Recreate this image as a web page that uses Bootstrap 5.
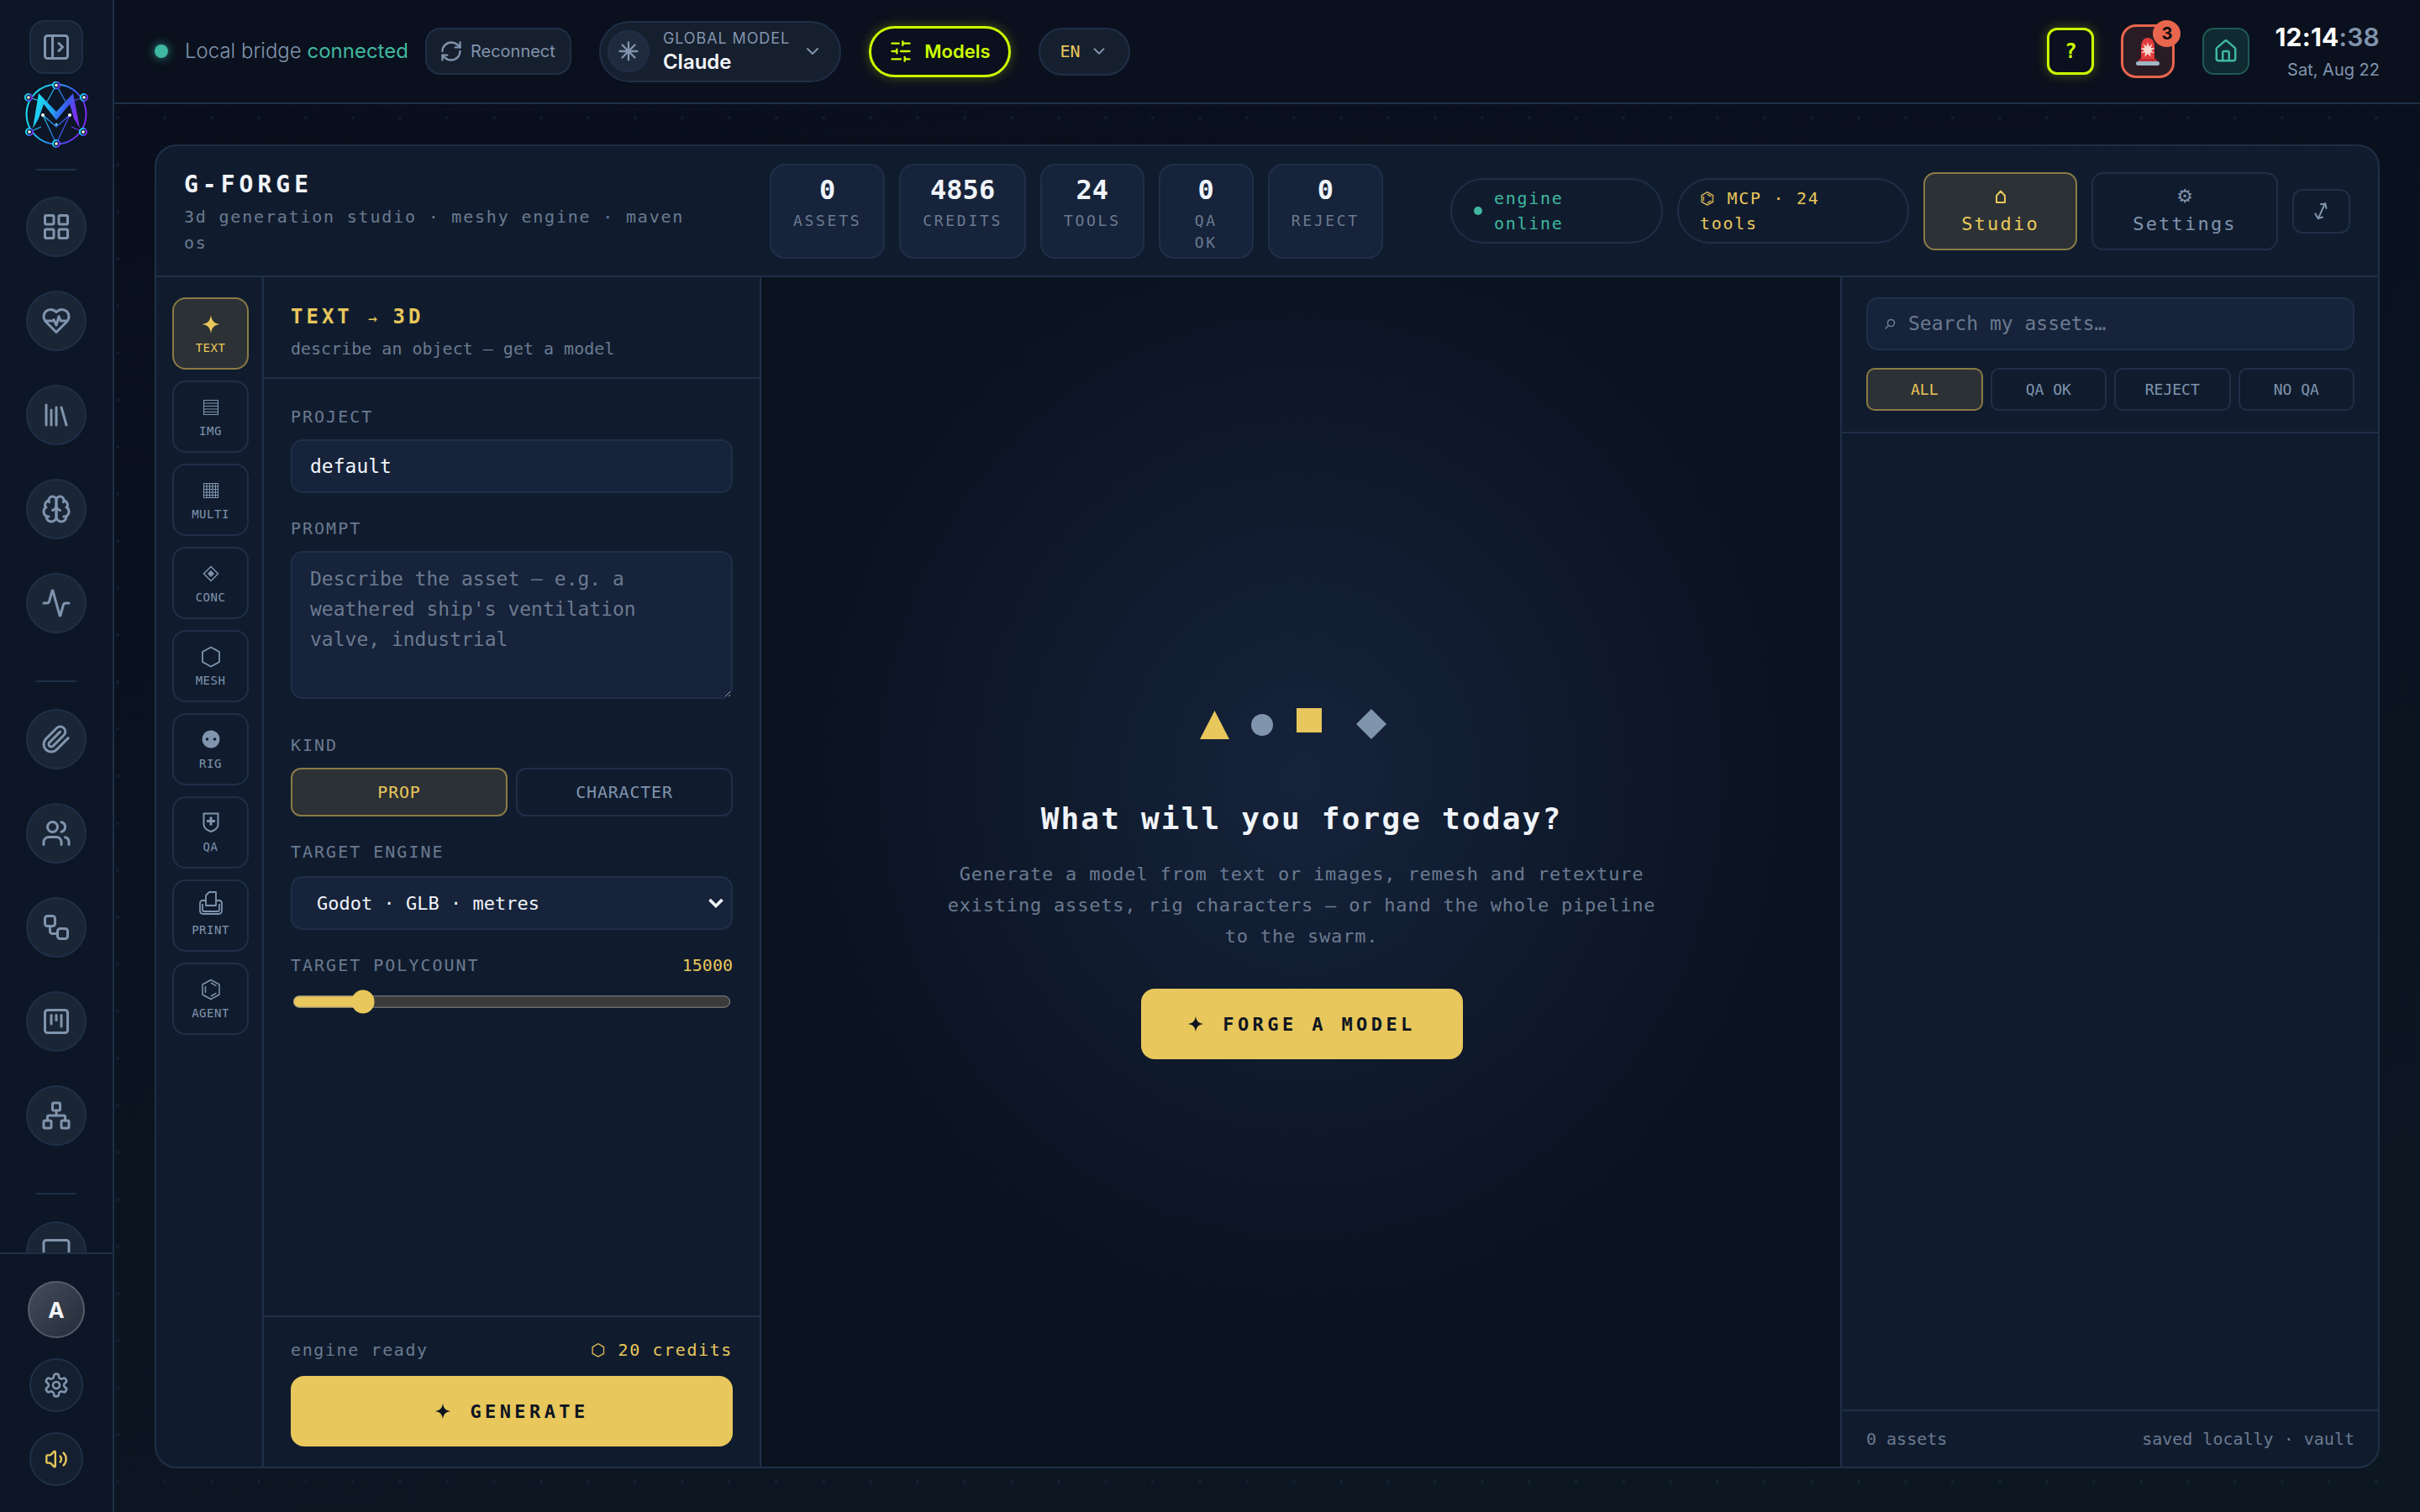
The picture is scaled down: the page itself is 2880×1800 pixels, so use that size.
<!DOCTYPE html>
<html lang="en" data-bs-theme="dark">
<head>
    <meta charset="UTF-8">
    <meta name="viewport" content="width=device-width, initial-scale=1.0">
    <title>G-Forge</title>
    <link href="https://cdn.jsdelivr.net/npm/bootstrap@5.3.0/dist/css/bootstrap.min.css" rel="stylesheet">
    <style>
        :root {
            --mono: "DejaVu Sans Mono", "Liberation Mono", monospace;
            --glyph: "DejaVu Sans", "DejaVu Sans Mono", sans-serif;
            --line: #1f2f47;
            --muted: #8094ad;
            --dim: #6b7a90;
            --gold: #e8c75c;
            --lime: #ccff00;
            --teal: #3fb8a0;
            --coral: #e8654e;
            --panel: #101c2e;
            --field: #16233a;
            --ink: #f0f4fa;
        }
        html, body { height: 100%; }
        body {
            width: 2880px;
            height: 1800px;
            overflow: hidden;
            color-scheme: dark;
            font-family: Inter, sans-serif;
            color: var(--ink);
            background: linear-gradient(170deg, #080e1b 0%, #0c1320 55%, #0c1722 100%);
        }
        svg.line-ico { fill: none; stroke: currentColor; stroke-width: 2; stroke-linecap: round; stroke-linejoin: round; display: block; }

        /* sidebar */
        .side-bar { width: 136px; height: 1800px; flex: none; background: #0c1626; border-right: 2px solid var(--line); }
        .side-head { padding-top: 24px; flex: none; }
        .side-toggle { width: 64px; height: 64px; border-radius: 18px; background: #172233; border: 2px solid var(--line); color: var(--muted); padding: 0; display: flex; align-items: center; justify-content: center; }
        .side-logo { width: 80px; height: 80px; margin-top: 9px; display: block; }
        .side-sep { width: 48px; height: 2px; background: var(--line); flex: none; }
        .side-head .side-sep { margin-top: 24px; }
        .side-nav { padding-top: 31px; gap: 40px; overflow: hidden; min-height: 0; }
        .side-nav .side-sep { margin: 16px 0 -8px; }
        .side-ico { width: 72px; height: 72px; flex: none; border-radius: 50%; padding: 0; background: #1a2636; border: 2px solid var(--line); color: var(--muted); display: flex; align-items: center; justify-content: center; }
        .side-foot { flex: none; border-top: 2px solid var(--line); padding: 32px 0 31px; gap: 24px; }
        .side-foot .side-ico { width: 64px; height: 64px; background: #14202f; }
        .side-foot .gold-ico { color: var(--gold); }
        .side-avatar { width: 68px; height: 68px; border-radius: 50%; background: linear-gradient(135deg, #434c5c, #262c38); border: 2px solid #565d6a; font-weight: 700; font-size: 26px; color: #f2f4f8; display: flex; align-items: center; justify-content: center; }

        /* top bar */
        .top-bar { height: 124px; flex: none; border-bottom: 2px solid var(--line); padding: 0 48px; background: #0a101d; }
        .bridge-dot { width: 16px; height: 16px; border-radius: 50%; background: var(--teal); box-shadow: 0 0 12px rgba(63, 184, 160, .75); }
        .bridge-text { font-size: 24px; font-weight: 300; color: var(--muted); white-space: nowrap; margin-left: 20px; }
        .bridge-text b { font-weight: 400; color: var(--teal); }
        .reconnect-btn { width: 174px; height: 56px; margin-left: 20px; border-radius: 18px; background: #161f2e; border: 2px solid var(--line); color: var(--muted); font-size: 20px; padding: 0 0 0 15px; display: flex; align-items: center; gap: 9px; }
        .model-pill { width: 288px; height: 73px; margin-left: 33px; border-radius: 37px; background: #161f2e; border: 2px solid var(--line); display: flex; align-items: center; padding: 0 0 0 8px; }
        .model-ico { width: 50px; height: 50px; border-radius: 50%; background: #1f2b3d; border: 2px solid var(--line); color: var(--muted); display: flex; align-items: center; justify-content: center; flex: none; }
        .model-txt { margin-left: 16px; flex-grow: 1; line-height: 1; white-space: nowrap; }
        .model-txt small { display: block; font-size: 18px; color: var(--muted); font-weight: 400; letter-spacing: .9px; margin-bottom: 7px; }
        .model-txt strong { display: block; font-size: 24px; font-weight: 600; color: #f4f6fa; }
        .model-pill svg.chev, .lang-btn svg { color: var(--muted); }
        .model-pill svg.chev { margin-right: 20px; }
        .models-btn { width: 169px; height: 61px; margin-left: 33px; border-radius: 31px; background: #0a101d; border: 3px solid var(--lime); color: var(--lime); font-size: 22px; font-weight: 600; box-shadow: 0 0 14px rgba(204, 255, 0, .3); padding: 0; display: flex; align-items: center; justify-content: center; gap: 14px; }
        .lang-btn { width: 109px; height: 57px; margin-left: 33px; border-radius: 29px; background: #161f2e; border: 2px solid var(--line); color: var(--gold); font-family: var(--mono); font-size: 20px; padding: 0; display: flex; align-items: center; justify-content: center; gap: 12px; }
        .help-btn { width: 56px; height: 56px; border-radius: 12px; background: #0a101d; border: 3px solid var(--lime); color: var(--lime); font-family: var(--mono); font-weight: 700; font-size: 24px; padding: 0; box-shadow: 0 0 14px rgba(204, 255, 0, .3); }
        .alarm-btn { width: 64px; height: 64px; margin-left: 32px; border-radius: 18px; background: #2a1c24; border: 3px solid var(--coral); padding: 0; display: flex; align-items: center; justify-content: center; position: relative; }
        .alarm-count { position: absolute; top: -8px; right: -10px; width: 33px; height: 32px; border-radius: 50%; background: var(--coral); color: #0a0d14; font-size: 20px; font-weight: 700; display: flex; align-items: center; justify-content: center; }
        .home-btn { width: 56px; height: 56px; margin-left: 33px; border-radius: 14px; background: #0f2a30; border: 2px solid #1f5a56; color: var(--teal); padding: 0; display: flex; align-items: center; justify-content: center; }
        .clock-box { margin-left: 30px; text-align: right; line-height: 1; }
        .clock-time { font-size: 30px; font-weight: 700; color: #fff; letter-spacing: .2px; margin-bottom: 14px; }
        .clock-time span { color: var(--muted); font-weight: 600; }
        .clock-date { font-size: 20px; color: var(--muted); }

        /* main area */
        .main-area {
            min-height: 0;
            padding: 48px 48px 52px;
            background-image: radial-gradient(circle, rgba(60, 84, 116, .17) 2px, transparent 2.5px);
            background-size: 56px 56px;
            background-position: -24px -12px;
        }
        .forge-panel { height: 100%; background: var(--panel); border: 2px solid var(--line); border-radius: 26px; overflow: hidden; font-family: var(--mono); }
        .panel-head { height: 156px; flex: none; border-bottom: 2px solid var(--line); padding: 0 33px; }
        .head-title { width: 630px; flex: none; }
        .head-title h1 { font-family: var(--mono); font-size: 28px; font-weight: 700; letter-spacing: 5px; margin: 3px 0 4px; line-height: 38px; color: #f2f5fa; }
        .head-title p { font-size: 20px; letter-spacing: 1.8px; line-height: 31px; color: var(--dim); margin: 0; }
        .stat-row { gap: 17px; margin-left: 67px; }
        .stat-box { height: 113px; padding: 9px 26px 0; border: 2px solid var(--line); border-radius: 18px; background: var(--field); text-align: center; flex: none; }
        .stat-box.qa-stat { width: 113px; }
        .stat-val { font-size: 32px; font-weight: 700; line-height: 40px; color: var(--ink); }
        .stat-lbl { font-size: 18px; letter-spacing: 2.7px; line-height: 26px; color: var(--dim); margin-top: 4px; }
        .head-right { gap: 17px; margin-left: auto; }
        .status-pill { height: 78px; border: 2px solid var(--line); border-radius: 39px; font-size: 20px; letter-spacing: 1.7px; line-height: 30px; display: flex; align-items: center; }
        .status-pill.engine-pill { width: 253px; padding-left: 26px; color: var(--teal); gap: 14px; }
        .status-pill.engine-pill i { width: 10px; height: 10px; border-radius: 50%; background: var(--teal); display: block; }
        .status-pill.mcp-pill { width: 276px; padding-left: 25px; color: var(--gold); }
        .tab-btn { height: 93px; padding: 0; border-radius: 14px; border: 2px solid var(--line); background: transparent; color: var(--muted); font-family: var(--mono); font-size: 22px; letter-spacing: 2.2px; line-height: 30px; display: flex; flex-direction: column; align-items: center; justify-content: center; gap: 4px; }
        .tab-btn span { font-family: var(--glyph); font-size: 22px; line-height: 28px; letter-spacing: 0; display: flex; align-items: center; height: 28px; }
        .tab-btn.on { color: var(--gold); background: #2c3135; border-color: #8a7a45; }
        .tab-studio { width: 183px; }
        .tab-settings { width: 222px; }
        .expand-btn { width: 69px; height: 53px; padding: 0; border-radius: 12px; border: 2px solid var(--line); background: transparent; color: var(--muted); display: flex; align-items: center; justify-content: center; }

        .panel-body { min-height: 0; }
        .tool-rail { width: 128px; flex: none; border-right: 2px solid var(--line); padding: 24px 16px 0 19px; gap: 13px; }
        .rail-btn { width: 91px; height: 86px; padding: 0; border-radius: 16px; border: 2px solid var(--line); background: transparent; color: var(--muted); display: flex; flex-direction: column; align-items: center; justify-content: center; gap: 3px; }
        .rail-btn svg { display: block; overflow: visible; }
        .rail-btn svg.rail-line { fill: none; stroke: currentColor; stroke-width: 1.5; stroke-linejoin: round; }
        .rail-btn svg.rail-line.rail-fine { stroke-width: 1.1; }
        .rail-btn svg.rail-line.rail-bold { stroke-width: 1.8; }
        .rail-btn em { font-family: var(--mono); font-style: normal; font-size: 14px; letter-spacing: .5px; line-height: 20px; }
        .rail-btn.on { color: var(--gold); background: #2c3135; border-color: #8a7a45; }

        .form-col { width: 592px; flex: none; border-right: 2px solid var(--line); }
        .form-head { height: 121px; flex: none; border-bottom: 2px solid var(--line); padding: 30px 32px 0; }
        .form-head h2 { font-family: var(--mono); font-size: 24px; font-weight: 700; letter-spacing: 4px; line-height: 34px; color: var(--gold); margin: 0 0 4px; }
        .form-head h2 span { font-size: 18px; font-weight: 400; letter-spacing: 0; }
        .form-head p { font-size: 20px; line-height: 30px; color: var(--dim); margin: 0; }
        .form-body { padding: 31px 32px 0 32px; }
        .form-group { margin-bottom: 28px; }
        .form-group.after-area { margin-bottom: 41px; }
        .field-lbl { font-size: 20px; letter-spacing: 2px; line-height: 28px; color: var(--dim); margin: 0 0 13px; display: block; }
        .field-lbl.lbl-far { margin-bottom: 15px; }
        .field-input { height: 64px; border-radius: 14px; border: 2px solid var(--line); background-color: var(--field); color: var(--ink); font-family: var(--mono); font-size: 23px; padding: 0 21px; }
        .field-input::placeholder { color: var(--dim); opacity: 1; }
        .field-area { height: 176px; border-radius: 14px; border: 2px solid var(--line); background-color: var(--field); font-family: var(--mono); font-size: 23px; line-height: 36px; padding: 13px 21px; }
        .field-area::placeholder { color: var(--dim); opacity: 1; }
        .field-select {
            height: 64px;
            border-radius: 14px;
            border: 2px solid var(--line);
            background-color: var(--field);
            color: var(--ink);
            font-family: var(--mono);
            font-size: 22px;
            padding: 0 40px 0 29px;
            background-image: url("data:image/svg+xml,%3csvg xmlns='http://www.w3.org/2000/svg' viewBox='0 0 20 16'%3e%3cpath fill='none' stroke='%23f0f4fa' stroke-width='3.6' d='M2.5 4l7.5 7.5L17.5 4'/%3e%3c/svg%3e");
            background-size: 20px 16px;
            background-position: right 8px center;
        }
        .kind-row { gap: 10px; }
        .kind-btn { flex: 1 1 0; height: 58px; padding: 0; border-radius: 12px; border: 2px solid var(--line); background: transparent; color: var(--muted); font-family: var(--mono); font-size: 20px; letter-spacing: .8px; }
        .kind-btn.on { color: var(--gold); background: #2c3135; border-color: #8a7a45; }
        .poly-val { font-size: 20px; color: var(--gold); line-height: 28px; }
        .poly-range { display: block; width: calc(100% - 2px); margin: 1px 0 0 1px; zoom: 1.8; accent-color: var(--gold); color-scheme: dark; }
        .form-foot { flex: none; border-top: 2px solid var(--line); padding: 25px 32px 24px 32px; }
        .foot-line { font-size: 20px; letter-spacing: 1.6px; line-height: 28px; margin-bottom: 17px; color: var(--dim); }
        .foot-line b { font-weight: 400; color: var(--gold); }
        .forge-btn { height: 84px; border-radius: 16px; border: 0; background: var(--gold); color: #0d1420; font-family: var(--mono); font-weight: 700; font-size: 22px; letter-spacing: 4.4px; padding: 0; display: flex; align-items: center; justify-content: center; gap: 22px; }
        .forge-btn:hover { background: var(--gold); color: #0d1420; }
        .forge-btn svg { display: block; fill: currentColor; }

        .stage-col { min-width: 0; padding-top: 28px; background: radial-gradient(ellipse 640px 700px at 50% 42%, #15233b 0%, #101b2e 45%, #0a111f 100%); }
        .stage-shapes { display: block; width: 222px; height: 38px; margin-right: 20px; }
        .stage-col h2 { font-family: var(--mono); font-size: 36px; font-weight: 700; letter-spacing: 2.2px; line-height: 50px; color: var(--ink); margin: 69px 0 22px; }
        .stage-col p { font-size: 22px; letter-spacing: .8px; line-height: 37px; color: var(--dim); margin: 0 0 44px; text-align: center; }
        .stage-col .forge-btn { width: 383px; }

        .asset-col { width: 640px; flex: none; border-left: 2px solid var(--line); margin-left: -2px; }
        .asset-top { flex: none; border-bottom: 2px solid var(--line); padding: 24px 28px 25px 29px; }
        .asset-search { height: 63px; border-radius: 14px; border: 2px solid var(--line); background: var(--field); color: var(--dim); font-size: 23px; padding: 0 19px; display: flex; align-items: center; gap: 15px; margin-bottom: 21px; }
        .asset-search svg { display: block; }
        .filter-row { gap: 9px; }
        .filter-btn { flex: 1 1 0; height: 51px; padding: 0; border-radius: 10px; border: 2px solid var(--line); background: transparent; color: var(--muted); font-family: var(--mono); font-size: 18px; }
        .filter-btn.on { color: var(--gold); background: #2c3135; border-color: #8a7a45; }
        .asset-foot { height: 68px; flex: none; border-top: 2px solid var(--line); padding: 0 28px 0 29px; font-size: 20px; color: var(--dim); }
    </style>
</head>
<body class="d-flex">

    <aside class="side-bar d-flex flex-column">
        <div class="side-head d-flex flex-column align-items-center">
            <button class="side-toggle" type="button">
                <svg class="line-ico" width="36" height="36" viewBox="0 0 24 24"><rect x="3" y="3" width="18" height="18" rx="2"/><path d="M9 3v18"/><path d="m14 9 3 3-3 3"/></svg>
            </button>
            <svg class="side-logo" viewBox="0 0 80 80">
                <defs>
                    <linearGradient id="logoGrad" x1="0" y1="0" x2="1" y2="0.3">
                        <stop offset="0" stop-color="#19f0f0"/>
                        <stop offset=".5" stop-color="#25a8f5"/>
                        <stop offset=".75" stop-color="#3a5cf0"/>
                        <stop offset="1" stop-color="#7a2ff0"/>
                    </linearGradient>
                </defs>
                <circle cx="40" cy="39" r="35.5" fill="none" stroke="url(#logoGrad)" stroke-width="2"/>
                <path d="M40 4 29 24M40 4l11 20M7 19l13 4M73 19l-13 4M8 60l14-6M72 60l-14-6M40 74 24 40M40 74l16-34M24 40l16 14 16-14" fill="none" stroke="url(#logoGrad)" stroke-width="1.2"/>
                <path d="M12 56 19 14 40 36 60 14 68 56 61 44 56 27 40 46 25 27 19 44z" fill="url(#logoGrad)"/>
                <g fill="#0c1626" stroke="url(#logoGrad)" stroke-width="2">
                    <circle cx="40" cy="4.5" r="4"/><circle cx="7" cy="19" r="4"/><circle cx="73" cy="19" r="4"/><circle cx="8" cy="60" r="4"/><circle cx="72" cy="60" r="4"/><circle cx="40" cy="74" r="4"/>
                </g>
                <g fill="#fff">
                    <circle cx="40" cy="4.5" r="1.8"/><circle cx="7" cy="19" r="1.8"/><circle cx="73" cy="19" r="1.8"/><circle cx="8" cy="60" r="1.8"/><circle cx="72" cy="60" r="1.8"/><circle cx="40" cy="74" r="1.8"/><circle cx="24" cy="40" r="2"/><circle cx="56" cy="40" r="2"/>
                </g>
                <circle cx="40" cy="51" r="1.5" fill="#6fdcff"/>
            </svg>
            <div class="side-sep"></div>
        </div>
        <nav class="side-nav d-flex flex-column align-items-center flex-grow-1">
            <button class="side-ico" type="button"><svg class="line-ico" width="36" height="36" viewBox="0 0 24 24"><rect x="3" y="3" width="7" height="7" rx="1"/><rect x="14" y="3" width="7" height="7" rx="1"/><rect x="14" y="14" width="7" height="7" rx="1"/><rect x="3" y="14" width="7" height="7" rx="1"/></svg></button>
            <button class="side-ico" type="button"><svg class="line-ico" width="36" height="36" viewBox="0 0 24 24"><path d="M19 14c1.49-1.46 3-3.21 3-5.5A5.5 5.5 0 0 0 16.5 3c-1.76 0-3 .5-4.5 2-1.5-1.5-2.74-2-4.5-2A5.5 5.5 0 0 0 2 8.5c0 2.3 1.5 4.05 3 5.5l7 7Z"/><path d="M3.22 12H9.5l.5-1 2 4.5 2-7 1.5 3.5h5.27"/></svg></button>
            <button class="side-ico" type="button"><svg class="line-ico" width="36" height="36" viewBox="0 0 24 24"><path d="m16 6 4 14"/><path d="M12 6v14"/><path d="M8 8v12"/><path d="M4 4v16"/></svg></button>
            <button class="side-ico" type="button"><svg class="line-ico" width="36" height="36" viewBox="0 0 24 24"><path d="M12 5a3 3 0 1 0-5.997.125 4 4 0 0 0-2.526 5.77 4 4 0 0 0 .556 6.588A4 4 0 1 0 12 18Z"/><path d="M12 5a3 3 0 1 1 5.997.125 4 4 0 0 1 2.526 5.77 4 4 0 0 1-.556 6.588A4 4 0 1 1 12 18Z"/><path d="M15 13a4.5 4.5 0 0 1-3-4 4.5 4.5 0 0 1-3 4"/><path d="M17.599 6.5a3 3 0 0 0 .399-1.375"/><path d="M6.003 5.125A3 3 0 0 0 6.401 6.5"/><path d="M3.477 10.896a4 4 0 0 1 .585-.396"/><path d="M19.938 10.5a4 4 0 0 1 .585.396"/><path d="M6 18a4 4 0 0 1-1.967-.516"/><path d="M19.967 17.484A4 4 0 0 1 18 18"/></svg></button>
            <button class="side-ico" type="button"><svg class="line-ico" width="36" height="36" viewBox="0 0 24 24"><path d="M22 12h-2.48a2 2 0 0 0-1.93 1.46l-2.35 8.36a.25.25 0 0 1-.48 0L9.24 2.18a.25.25 0 0 0-.48 0l-2.35 8.36A2 2 0 0 1 4.49 12H2"/></svg></button>
            <div class="side-sep"></div>
            <button class="side-ico" type="button"><svg class="line-ico" width="36" height="36" viewBox="0 0 24 24"><path d="m21.44 11.05-9.19 9.19a6 6 0 0 1-8.49-8.49l8.57-8.57A4 4 0 1 1 18 8.84l-8.59 8.57a2 2 0 0 1-2.83-2.83l8.49-8.48"/></svg></button>
            <button class="side-ico" type="button"><svg class="line-ico" width="36" height="36" viewBox="0 0 24 24"><path d="M16 21v-2a4 4 0 0 0-4-4H6a4 4 0 0 0-4 4v2"/><circle cx="9" cy="7" r="4"/><path d="M22 21v-2a4 4 0 0 0-3-3.87"/><path d="M16 3.13a4 4 0 0 1 0 7.75"/></svg></button>
            <button class="side-ico" type="button"><svg class="line-ico" width="36" height="36" viewBox="0 0 24 24"><rect x="3" y="3" width="8" height="8" rx="2"/><path d="M7 11v4a2 2 0 0 0 2 2h4"/><rect x="13" y="13" width="8" height="8" rx="2"/></svg></button>
            <button class="side-ico" type="button"><svg class="line-ico" width="36" height="36" viewBox="0 0 24 24"><rect x="3" y="3" width="18" height="18" rx="2"/><path d="M8 7v7"/><path d="M12 7v4"/><path d="M16 7v9"/></svg></button>
            <button class="side-ico" type="button"><svg class="line-ico" width="36" height="36" viewBox="0 0 24 24"><rect x="16" y="16" width="6" height="6" rx="1"/><rect x="2" y="16" width="6" height="6" rx="1"/><rect x="9" y="2" width="6" height="6" rx="1"/><path d="M5 16v-3a1 1 0 0 1 1-1h12a1 1 0 0 1 1 1v3"/><path d="M12 12V8"/></svg></button>
            <div class="side-sep"></div>
            <button class="side-ico" type="button"><svg class="line-ico" width="36" height="36" viewBox="0 0 24 24"><rect x="2" y="3" width="20" height="14" rx="2"/><path d="M8 21h8"/><path d="M12 17v4"/></svg></button>
        </nav>
        <div class="side-foot d-flex flex-column align-items-center">
            <div class="side-avatar">A</div>
            <button class="side-ico" type="button"><svg class="line-ico" width="32" height="32" viewBox="0 0 24 24"><path d="M12.22 2h-.44a2 2 0 0 0-2 2v.18a2 2 0 0 1-1 1.73l-.43.25a2 2 0 0 1-2 0l-.15-.08a2 2 0 0 0-2.73.73l-.22.38a2 2 0 0 0 .73 2.73l.15.1a2 2 0 0 1 1 1.72v.51a2 2 0 0 1-1 1.74l-.15.09a2 2 0 0 0-.73 2.73l.22.38a2 2 0 0 0 2.73.73l.15-.08a2 2 0 0 1 2 0l.43.25a2 2 0 0 1 1 1.73V20a2 2 0 0 0 2 2h.44a2 2 0 0 0 2-2v-.18a2 2 0 0 1 1-1.73l.43-.25a2 2 0 0 1 2 0l.15.08a2 2 0 0 0 2.73-.73l.22-.39a2 2 0 0 0-.73-2.73l-.15-.08a2 2 0 0 1-1-1.74v-.5a2 2 0 0 1 1-1.74l.15-.09a2 2 0 0 0 .73-2.73l-.22-.38a2 2 0 0 0-2.73-.73l-.15.08a2 2 0 0 1-2 0l-.43-.25a2 2 0 0 1-1-1.73V4a2 2 0 0 0-2-2z"/><circle cx="12" cy="12" r="3"/></svg></button>
            <button class="side-ico gold-ico" type="button"><svg class="line-ico" width="28" height="28" viewBox="0 0 24 24"><path d="M11 4.702a.705.705 0 0 0-1.203-.498L6.413 7.587A1.4 1.4 0 0 1 5.416 8H3a1 1 0 0 0-1 1v6a1 1 0 0 0 1 1h2.416a1.4 1.4 0 0 1 .997.413l3.383 3.384A.705.705 0 0 0 11 19.298z"/><path d="M16 9a5 5 0 0 1 0 6"/><path d="M19.364 18.364a9 9 0 0 0 0-12.728"/></svg></button>
        </div>
    </aside>

    <div class="flex-grow-1 d-flex flex-column">
        <header class="top-bar d-flex align-items-center">
            <span class="bridge-dot"></span>
            <span class="bridge-text">Local bridge <b>connected</b></span>
            <button class="reconnect-btn" type="button">
                <svg class="line-ico" width="28" height="28" viewBox="0 0 24 24"><path d="M3 12a9 9 0 0 1 9-9 9.75 9.75 0 0 1 6.74 2.74L21 8"/><path d="M21 3v5h-5"/><path d="M21 12a9 9 0 0 1-9 9 9.75 9.75 0 0 1-6.74-2.74L3 16"/><path d="M8 16H3v5"/></svg>
                Reconnect
            </button>
            <div class="model-pill">
                <span class="model-ico"><svg class="line-ico" width="28" height="28" viewBox="0 0 24 24"><path d="M12 3v18M3 12h18M5.6 5.6l12.8 12.8M18.4 5.6 5.6 18.4"/></svg></span>
                <div class="model-txt"><small>GLOBAL MODEL</small><strong>Claude</strong></div>
                <svg class="line-ico chev" width="24" height="24" viewBox="0 0 24 24"><path d="m6 9 6 6 6-6"/></svg>
            </div>
            <button class="models-btn" type="button">
                <svg class="line-ico" width="28" height="28" viewBox="0 0 24 24"><path d="M21 4h-7M10 4H3M21 12h-9M8 12H3M21 20h-5M12 20H3M14 2v4M8 10v4M16 18v4"/></svg>
                Models
            </button>
            <button class="lang-btn" type="button">EN <svg class="line-ico" width="22" height="22" viewBox="0 0 24 24"><path d="m6 9 6 6 6-6"/></svg></button>

            <button class="help-btn ms-auto" type="button">?</button>
            <button class="alarm-btn" type="button">
                <svg width="34" height="36" viewBox="0 0 34 36">
                    <path d="M9 28V13C9 6 12 2 17 2s8 4 8 11v15z" fill="#e23b3b"/>
                    <path d="M17 7l1.6 5.2 4-3.2-2 5 5 .6-4.6 2.6 4.2 3-5.2-.6.6 5.2L17 21l-3.6 3.8.6-5.2-5.2.6 4.2-3-4.6-2.6 5-.6-2-5 4 3.2z" fill="#f6d8d0"/>
                    <path d="M7 27h20l2 4H5z" fill="#c22b30"/>
                    <rect x="3" y="30" width="28" height="5" rx="2.5" fill="#9fb6c6"/>
                </svg>
                <span class="alarm-count">3</span>
            </button>
            <button class="home-btn" type="button">
                <svg class="line-ico" width="30" height="30" viewBox="0 0 24 24"><path d="M15 21v-8a1 1 0 0 0-1-1h-4a1 1 0 0 0-1 1v8"/><path d="M3 10a2 2 0 0 1 .709-1.528l7-5.999a2 2 0 0 1 2.582 0l7 5.999A2 2 0 0 1 21 10v9a2 2 0 0 1-2 2H5a2 2 0 0 1-2-2z"/></svg>
            </button>
            <div class="clock-box">
                <div class="clock-time">12:14<span>:38</span></div>
                <div class="clock-date">Sat, Aug 22</div>
            </div>
        </header>

        <main class="main-area flex-grow-1">
            <section class="forge-panel d-flex flex-column">
                <div class="panel-head d-flex align-items-center">
                    <div class="head-title">
                        <h1>G-FORGE</h1>
                        <p>3d generation studio · meshy engine · maven os</p>
                    </div>
                    <div class="stat-row d-flex">
                        <div class="stat-box"><div class="stat-val">0</div><div class="stat-lbl">ASSETS</div></div>
                        <div class="stat-box"><div class="stat-val">4856</div><div class="stat-lbl">CREDITS</div></div>
                        <div class="stat-box"><div class="stat-val">24</div><div class="stat-lbl">TOOLS</div></div>
                        <div class="stat-box qa-stat"><div class="stat-val">0</div><div class="stat-lbl">QA OK</div></div>
                        <div class="stat-box"><div class="stat-val">0</div><div class="stat-lbl">REJECT</div></div>
                    </div>
                    <div class="head-right d-flex align-items-center">
                        <div class="status-pill engine-pill"><i></i><span>engine<br>online</span></div>
                        <div class="status-pill mcp-pill"><span>⌬ MCP · 24<br>tools</span></div>
                        <button class="tab-btn tab-studio on" type="button"><span><svg class="line-ico" width="16" height="16" viewBox="0 0 16 16" stroke-width="1.5"><path d="M3 15V7l5-5.5L13 7v8z"/></svg></span>Studio</button>
                        <button class="tab-btn tab-settings" type="button"><span>⚙</span>Settings</button>
                        <button class="expand-btn" type="button"><svg class="line-ico" width="22" height="22" viewBox="0 0 22 22" stroke-width="1.5"><path d="M7 20 15 2"/><path d="M10 3h5.5l1 5"/><path d="M3.5 14.5 6.5 20 12 18.5"/></svg></button>
                    </div>
                </div>

                <div class="panel-body d-flex flex-grow-1">
                    <div class="tool-rail d-flex flex-column">
                        <button class="rail-btn on" type="button">
                            <svg width="30" height="30" viewBox="0 0 30 30" fill="currentColor"><path d="M15 4c1 7 3.5 10 10.500 11-7 1-9.500 4-10.500 11-1-7-3.500-10-10.500-11C11.500 14 14 11 15 4z"/></svg>
                            <em>TEXT</em>
                        </button>
                        <button class="rail-btn" type="button">
                            <svg class="rail-line rail-fine" width="30" height="30" viewBox="0 0 30 30"><path d="M6.500 6.500h17v17h-17zM6.500 10h17M6.500 13.500h17M6.500 17h17M6.500 20.500h17"/></svg>
                            <em>IMG</em>
                        </button>
                        <button class="rail-btn" type="button">
                            <svg class="rail-line rail-fine" width="30" height="30" viewBox="0 0 30 30"><path d="M6.500 6.500h17v17h-17zM6.500 10h17M6.500 13.500h17M6.500 17h17M6.500 20.500h17M10 6.500v17M13.500 6.500v17M17 6.500v17M20.500 6.500v17"/></svg>
                            <em>MULTI</em>
                        </button>
                        <button class="rail-btn" type="button">
                            <svg width="30" height="30" viewBox="0 0 30 30"><path d="M15 6.500 23.500 15 15 23.500 6.500 15z" fill="none" stroke="currentColor" stroke-width="1.5"/><path d="M15 11l4 4-4 4-4-4z" fill="currentColor"/></svg>
                            <em>CONC</em>
                        </button>
                        <button class="rail-btn" type="button">
                            <svg class="rail-line rail-bold" width="30" height="30" viewBox="0 0 30 30"><path d="M15 3.500 25 9v12l-10 5.500L5 21V9z"/></svg>
                            <em>MESH</em>
                        </button>
                        <button class="rail-btn" type="button">
                            <svg width="30" height="30" viewBox="0 0 30 30"><circle cx="15" cy="14" r="10.500" fill="currentColor"/><circle cx="10.500" cy="14" r="1.800" fill="#101c2e"/><circle cx="19.500" cy="14" r="1.800" fill="#101c2e"/></svg>
                            <em>RIG</em>
                        </button>
                        <button class="rail-btn" type="button">
                            <svg width="30" height="30" viewBox="0 0 30 30"><path d="M6.500 3.500h17v13c0 4-4 7-8.500 8.500-4.500-1.500-8.500-4.500-8.500-8.500z" fill="none" stroke="currentColor" stroke-width="2"/><path d="M15 7.500v10M10 12.500h10" stroke="currentColor" stroke-width="3"/></svg>
                            <em>QA</em>
                        </button>
                        <button class="rail-btn" type="button">
                            <svg class="rail-line rail-bold" width="30" height="30" viewBox="0 0 30 30"><path d="M13-2h8v16H9V2z"/><path d="M9 8H5.500Q2 8 2 11.500V20q0 4 4 4h18q4 0 4-4v-8.500Q28 8 24.500 8H21"/><path d="M5 12v7q0 2 2 2h16q2 0 2-2v-7"/></svg>
                            <em>PRINT</em>
                        </button>
                        <button class="rail-btn" type="button">
                            <svg class="rail-line" width="30" height="30" viewBox="0 0 30 30"><path d="M15 3.500 25 9v12l-10 5.500L5 21V9z"/><path d="M8.500 11v8M15 7l6.500 3.800M21.500 19.200 15 23"/></svg>
                            <em>AGENT</em>
                        </button>
                    </div>

                    <div class="form-col d-flex flex-column">
                        <div class="form-head">
                            <h2>TEXT <span>→</span> 3D</h2>
                            <p>describe an object — get a model</p>
                        </div>
                        <div class="form-body flex-grow-1">
                            <div class="form-group">
                                <label class="field-lbl" for="projectName">PROJECT</label>
                                <input class="form-control field-input" id="projectName" type="text" value="default">
                            </div>
                            <div class="form-group after-area">
                                <label class="field-lbl" for="promptText">PROMPT</label>
                                <textarea class="form-control field-area" id="promptText" placeholder="Describe the asset — e.g. a weathered ship's ventilation valve, industrial"></textarea>
                            </div>
                            <div class="form-group">
                                <span class="field-lbl">KIND</span>
                                <div class="kind-row d-flex">
                                    <button class="kind-btn on" type="button">PROP</button>
                                    <button class="kind-btn" type="button">CHARACTER</button>
                                </div>
                            </div>
                            <div class="form-group">
                                <label class="field-lbl lbl-far" for="targetEngine">TARGET ENGINE</label>
                                <select class="form-select field-select" id="targetEngine"><option>Godot · GLB · metres</option></select>
                            </div>
                            <div class="d-flex justify-content-between">
                                <label class="field-lbl" for="polyCount">TARGET POLYCOUNT</label>
                                <span class="poly-val">15000</span>
                            </div>
                            <input class="poly-range" id="polyCount" type="range" min="1000" max="100000" value="15000">
                        </div>
                        <div class="form-foot">
                            <div class="foot-line d-flex justify-content-between"><span>engine ready</span><b>⬡ 20 credits</b></div>
                            <button class="btn forge-btn w-100" type="button"><svg width="20" height="20" viewBox="0 0 24 24"><path d="M12 1c1 7 4 10 11 11-7 1-10 4-11 11-1-7-4-10-11-11 7-1 10-4 11-11z"/></svg>GENERATE</button>
                        </div>
                    </div>

                    <div class="stage-col flex-grow-1 d-flex flex-column align-items-center justify-content-center">
                        <svg class="stage-shapes" viewBox="0 0 222 38">
                            <path d="M17.500 3 35 37H0z" fill="#e8c75c"/>
                            <circle cx="74" cy="20" r="13" fill="#8094ad"/>
                            <rect x="115" y="0" width="30" height="29" fill="#e8c75c"/>
                            <path d="M204 1l18 18-18 18-18-18z" fill="#8094ad"/>
                        </svg>
                        <h2>What will you forge today?</h2>
                        <p>Generate a model from text or images, remesh and retexture<br>existing assets, rig characters — or hand the whole pipeline<br>to the swarm.</p>
                        <button class="btn forge-btn" type="button"><svg width="20" height="20" viewBox="0 0 24 24"><path d="M12 1c1 7 4 10 11 11-7 1-10 4-11 11-1-7-4-10-11-11 7-1 10-4 11-11z"/></svg>FORGE A MODEL</button>
                    </div>

                    <div class="asset-col d-flex flex-column">
                        <div class="asset-top">
                            <div class="asset-search"><svg width="14" height="14" viewBox="0 0 14 14" fill="none" stroke="currentColor" stroke-width="1.6"><circle cx="8.500" cy="5.500" r="4"/><path d="M5.500 8.500 1.500 12.500"/></svg>Search my assets…</div>
                            <div class="filter-row d-flex">
                                <button class="filter-btn on" type="button">ALL</button>
                                <button class="filter-btn" type="button">QA OK</button>
                                <button class="filter-btn" type="button">REJECT</button>
                                <button class="filter-btn" type="button">NO QA</button>
                            </div>
                        </div>
                        <div class="flex-grow-1"></div>
                        <div class="asset-foot d-flex align-items-center justify-content-between"><span>0 assets</span><span>saved locally · vault</span></div>
                    </div>
                </div>
            </section>
        </main>
    </div>
</body>
</html>
